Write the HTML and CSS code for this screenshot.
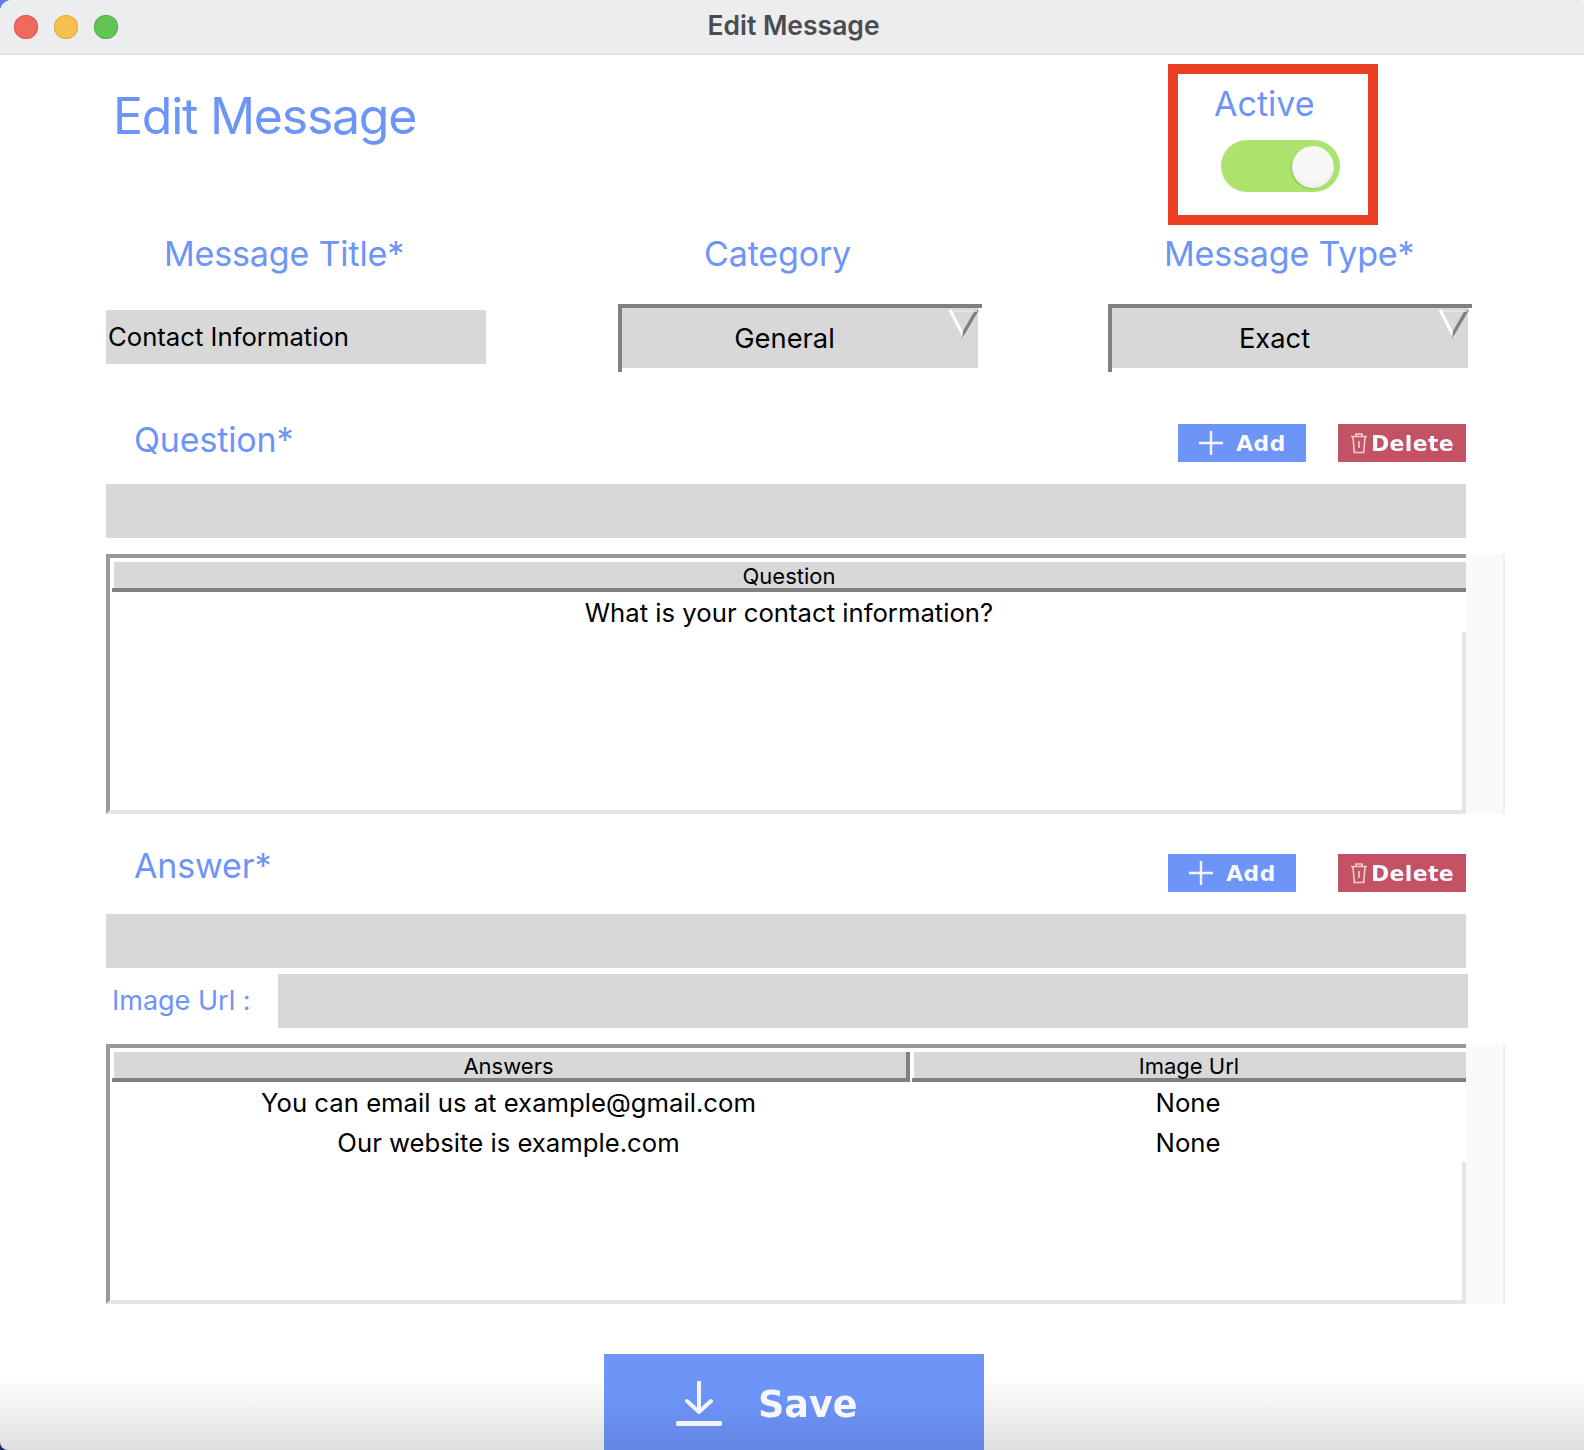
FILE: index.html
```html
<!DOCTYPE html>
<html lang="en">
<head>
<meta charset="utf-8">
<title>Edit Message</title>
<link rel="stylesheet" href="styles.css">
</head>
<body>
<div class="window">
  <header class="titlebar">
    <div class="lights">
      <span class="light red"></span>
      <span class="light yellow"></span>
      <span class="light green"></span>
    </div>
    <div class="wintitle">Edit Message</div>
  </header>
  <main class="content">
    <div class="head-row">
      <h1 class="page-title">Edit Message</h1>
      <div class="active-box">
        <div class="active-label">Active</div>
        <div class="toggle"><span class="knob"></span></div>
      </div>
    </div>
    <div class="label-row">
      <span class="label l-title">Message Title*</span>
      <span class="label l-cat">Category</span>
      <span class="label l-type">Message Type*</span>
    </div>
    <div class="field-row">
      <div class="input title-input">Contact Information</div>
      <div class="select sel-cat"><span class="sel-text">General</span>
        <svg class="arrow" viewBox="0 0 30 30"><path d="M1 1L15 28" stroke="#fff" stroke-width="3" fill="none"/><path d="M13 30L14 22L26 1H30Z" fill="#808080"/><path d="M3 2H28" stroke="#e8e8e8" stroke-width="1.500" fill="none"/></svg>
      </div>
      <div class="select sel-type"><span class="sel-text">Exact</span>
        <svg class="arrow" viewBox="0 0 30 30"><path d="M1 1L15 28" stroke="#fff" stroke-width="3" fill="none"/><path d="M13 30L14 22L26 1H30Z" fill="#808080"/><path d="M3 2H28" stroke="#e8e8e8" stroke-width="1.500" fill="none"/></svg>
      </div>
    </div>

    <div class="section-head q-head">
      <span class="label section-label">Question*</span>
      <button class="btn add"><svg class="plus" viewBox="0 0 26 26"><path d="M13 1V25M1 13H25" stroke="#f4f6fe" stroke-width="2.400" fill="none"/></svg><span class="soft">Add</span></button>
      <button class="btn del"><svg class="trash" viewBox="0 0 18 22"><path d="M1 4.500H17M6 4V2H12V4M3 5L4.300 20.500H13.700L15 5M9 9V16" stroke="#eecdd2" stroke-width="1.600" fill="none"/></svg><span class="soft">Delete</span></button>
    </div>
    <div class="input wide"></div>
    <div class="table-wrap q-table">
      <div class="table">
        <div class="thead"><div class="th">Question</div></div>
        <div class="tr first"><div class="td">What is your contact information?</div></div>
      </div>
      <div class="scroll"></div>
    </div>

    <div class="section-head a-head">
      <span class="label section-label">Answer*</span>
      <button class="btn add add2"><svg class="plus" viewBox="0 0 26 26"><path d="M13 1V25M1 13H25" stroke="#f4f6fe" stroke-width="2.400" fill="none"/></svg><span class="soft">Add</span></button>
      <button class="btn del"><svg class="trash" viewBox="0 0 18 22"><path d="M1 4.500H17M6 4V2H12V4M3 5L4.300 20.500H13.700L15 5M9 9V16" stroke="#eecdd2" stroke-width="1.600" fill="none"/></svg><span class="soft">Delete</span></button>
    </div>
    <div class="input wide"></div>
    <div class="url-row">
      <span class="url-label">Image Url :</span>
      <div class="input url-input"></div>
    </div>
    <div class="table-wrap a-table">
      <div class="table">
        <div class="thead"><div class="th col-a">Answers</div><div class="th col-b">Image Url</div></div>
        <div class="tr first"><div class="td col-a">You can email us at example@gmail.com</div><div class="td col-b">None</div></div>
        <div class="tr"><div class="td col-a">Our website is example.com</div><div class="td col-b">None</div></div>
      </div>
      <div class="scroll"></div>
    </div>
    <div class="save-row">
      <button class="save"><svg class="dl" viewBox="0 0 46 46"><path d="M23 1V30M11 20L23 31L35 20" stroke="#f3f5fe" stroke-width="4" fill="none" stroke-linecap="round" stroke-linejoin="round"/><path d="M2 42.500H44" stroke="#f3f5fe" stroke-width="5" fill="none" stroke-linecap="round"/></svg><span class="soft">Save</span></button>
    </div>
  </main>
</div>
</body>
</html>
```
FILE: styles.css
```css
* { box-sizing: border-box; }
html, body { margin: 0; padding: 0; }
body { width: 1584px; height: 1450px; overflow: hidden; background: linear-gradient(#5b7fe0 50%, #1a2a6c 50%) no-repeat 0 0 / 50% 100%, #fff; font-family: Inter, "Liberation Sans", sans-serif; }
.window { width: 1584px; height: 1450px; display: flex; flex-direction: column; border-top-left-radius: 12px; border-top-right-radius: 4px; border-bottom-left-radius: 8px; overflow: hidden; background: linear-gradient(to bottom, #fff 0, #fff 1375px, #dfdfdf 1450px); }
.titlebar { height: 55px; flex: none; background: #ecedef; border-bottom: 1px solid #dcdcdc; display: flex; align-items: center; position: relative; padding-left: 14px; }
.lights { display: flex; gap: 16px; }
.light { width: 24px; height: 24px; border-radius: 50%; display: block; }
.red { background: #f0695f; box-shadow: inset 0 0 0 1px #de5a50; }
.yellow { background: #f6c04f; box-shadow: inset 0 0 0 1px #e2ab3e; }
.green { background: #61c555; box-shadow: inset 0 0 0 1px #52b147; }
.wintitle { position: absolute; left: 3px; right: 0; top: 10px; text-align: center; font-size: 26.500px; line-height: 30px; font-weight: 600; color: #4c4c50; }
.content { padding-left: 106px; width: 1584px; flex: 1; }
.head-row { display: flex; height: 170px; padding-top: 9px; align-items: flex-start; }
.page-title { margin: 22px 0 0 7px; font-size: 50px; line-height: 60px; font-weight: 400; letter-spacing: -1.250px; color: #6d95f8; }
.active-box { margin-left: auto; margin-right: 206px; width: 210px; height: 161px; border: 10px solid #eb4025; padding: 9px 0 0 36px; }
.active-label { font-size: 34px; line-height: 42px; color: #6d95f8; }
.toggle { width: 119px; height: 52px; margin: 15px 0 0 7px; border-radius: 26px; background: #abe36d; position: relative; }
.knob { position: absolute; right: 6px; top: 6px; width: 42px; height: 42px; border-radius: 50%; background: radial-gradient(circle at 50% 40%, #f7f7f7 55%, #e2e2e2 100%); box-shadow: -1px 1px 2px #8fc459; }
.label { font-size: 34px; line-height: 42px; letter-spacing: -0.150px; color: #6d95f8; display: block; }
.label-row { display: flex; height: 85px; padding-top: 8px; }
.l-title { margin-left: 58px; width: 540px; }
.l-cat { width: 460px; }
.field-row { display: flex; align-items: flex-start; height: 109px; }
.input { background: #d8d8d8; height: 54px; }
.title-input { width: 380px; font-size: 25.700px; line-height: 54px; padding-left: 2px; color: #000; }
.select { width: 364px; height: 68px; margin-top: -6px; border-top: 4px solid #808080; border-left: 4px solid #808080; position: relative; background: linear-gradient(#d8d8d8,#d8d8d8) no-repeat 0 0 / 356px 60px; font-size: 27.300px; text-align: center; line-height: 61px; color: #000; }
.sel-cat { margin-left: 132px; }
.sel-type { margin-left: 126px; }
.sel-text { display: block; width: 325px; }
.arrow { position: absolute; right: 3px; top: 1px; width: 30px; height: 30px; }
.section-head { display: flex; align-items: flex-start; width: 1360px; }
.section-label { margin-right: auto; }
.q-head { height: 65px; }
.q-head .section-label { margin: 0 auto 0 28px; }
.q-head .btn { margin-top: 5px; }
.a-head { height: 70px; margin-top: 30px; }
.a-head .section-label { margin: 1px auto 0 28px; }
.a-head .btn { margin-top: 10px; }
.btn { height: 38px; width: 128px; border: 0; padding: 0; display: flex; align-items: center; justify-content: center; color: #f7f8fe; font-family: "DejaVu Sans", sans-serif; font-weight: 700; font-size: 22px; letter-spacing: 0.300px; }
.soft { filter: blur(0.5px); }
.add { background: #6d95f8; gap: 12px; margin-right: 32px; }
.add2 { margin-right: 42px; }
.del { background: #c35264; gap: 3px; }
.plus { width: 26px; height: 26px; filter: blur(0.4px); }
.trash { width: 18px; height: 22px; filter: blur(0.4px); }
.wide { width: 1360px; }
.table-wrap { display: flex; width: 1399px; margin-top: 16px; }
.table { width: 1360px; height: 260px; border-top: 4px solid #999; border-left: 4px solid #999; border-bottom: 4px solid #e5e5e5; position: relative; padding-top: 4px; }
.table::after { content: ""; position: absolute; right: 0; top: 74px; bottom: 0; width: 4px; background: #e5e5e5; }
.a-table .table::after { top: 114px; }
.scroll { width: 39px; height: 260px; background: #fafafa; border-right: 2px solid #eee; }
.thead { display: flex; height: 30px; margin-left: 2px; }
.th { flex: 1; height: 30px; border-bottom: 4px solid #808080; background: linear-gradient(#d8d8d8,#d8d8d8) no-repeat 2px 0 / 100% 100%; text-align: center; font-size: 22px; line-height: 28px; color: #000; }
.tr { display: flex; height: 40px; }
.tr.first { margin-top: 1px; }
.td { flex: 1; text-align: center; font-size: 25.700px; line-height: 40px; color: #000; padding-left: 2px; }
.th.col-a { flex: none; width: 798px; border-right: 4px solid #808080; margin-right: 2px; padding-right: 1px; }
.th.col-b { flex: 1; }
.td.col-a { flex: none; width: 797px; padding-left: 0; }
.td.col-b { flex: none; width: 559px; padding-left: 3px; }
.url-row { display: flex; align-items: center; margin-top: 6px; }
.url-label { width: 172px; padding: 0 0 2px 6px; font-size: 27px; color: #6d95f8; }
.url-input { width: 1190px; }
.save-row { display: flex; margin-top: 50px; padding-left: 498px; }
.save { width: 380px; height: 96px; border: 0; padding: 4px 0 0 72px; display: flex; align-items: center; gap: 36px; background: linear-gradient(#6d95f8 0, #6d95f8 40%, #6386e3 100%); color: #f5f6fe; font-family: "DejaVu Sans", sans-serif; font-size: 36.500px; font-weight: 700; }
.dl { width: 46px; height: 46px; filter: blur(0.5px); }
```
